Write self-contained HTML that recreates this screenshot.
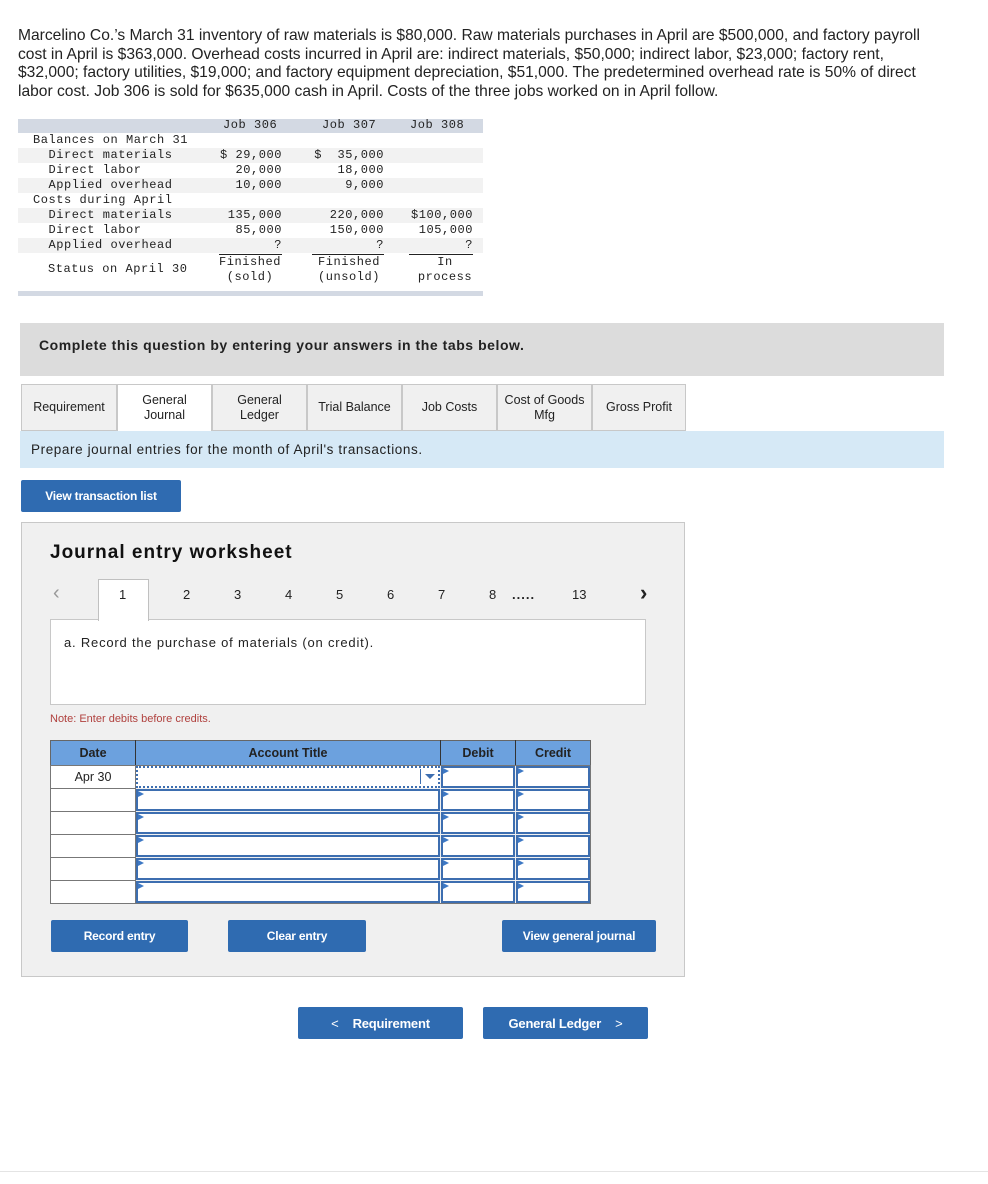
<!DOCTYPE html>
<html><head><meta charset="utf-8"><style>
*{box-sizing:border-box;margin:0;padding:0}
body{width:988px;height:1184px;background:#fff;position:relative;font-family:"Liberation Sans",Arial,sans-serif;color:#222;overflow:hidden}
.a{position:absolute}
.intro{left:18px;top:27px;font-size:15.6px;line-height:18.5px;color:#222;white-space:nowrap}
.mono{font-family:"Liberation Mono",monospace;font-size:12px;letter-spacing:0.55px;color:#222;white-space:pre}
.tab{position:absolute;top:384px;height:47px;border:1px solid #c8c8c8;background:#f0f0f0;font-size:12.5px;display:flex;align-items:center;justify-content:center;text-align:center;line-height:15px;color:#222}
.btn{position:absolute;background:#2f6bb1;color:#fff;font-weight:bold;font-size:12px;display:flex;align-items:center;justify-content:center;border-radius:2px;letter-spacing:-0.2px}
.pg{position:absolute;top:587px;font-size:13px;color:#222}
.cell{position:absolute;border:2px solid #3d6eb0;background:#fff}
.cell:before{content:"";position:absolute;left:0;top:0;border-left:6px solid #3d78c4;border-top:3px solid transparent;border-bottom:3px solid transparent}
.dc{position:absolute;left:50px;width:86px;height:24px;border:1px solid #777;background:#fff;font-size:12.5px;text-align:center;line-height:22px}
</style></head><body>
<div class="a intro">Marcelino Co.’s March 31 inventory of raw materials is $80,000. Raw materials purchases in April are $500,000, and factory payroll<br>cost in April is $363,000. Overhead costs incurred in April are: indirect materials, $50,000; indirect labor, $23,000; factory rent,<br>$32,000; factory utilities, $19,000; and factory equipment depreciation, $51,000. The predetermined overhead rate is 50% of direct<br>labor cost. Job 306 is sold for $635,000 cash in April. Costs of the three jobs worked on in April follow.</div>

<div class="a" style="left:18px;top:119px;width:465px;height:14px;background:#d3d9e3"></div>
<div class="a" style="left:18px;top:148px;width:465px;height:15px;background:#f2f2f2"></div>
<div class="a" style="left:18px;top:178px;width:465px;height:15px;background:#f2f2f2"></div>
<div class="a" style="left:18px;top:208px;width:465px;height:15px;background:#f2f2f2"></div>
<div class="a" style="left:18px;top:238px;width:465px;height:15px;background:#f2f2f2"></div>
<div class="a" style="left:18px;top:291px;width:465px;height:5px;background:#d3d9e3"></div>
<div class="a" style="left:219px;top:254px;width:63px;height:1px;background:#222"></div>
<div class="a" style="left:312px;top:254px;width:72px;height:1px;background:#222"></div>
<div class="a" style="left:409px;top:254px;width:64px;height:1px;background:#222"></div>

<div class="a mono" style="left:223px;top:118px">Job 306</div>
<div class="a mono" style="left:322px;top:118px">Job 307</div>
<div class="a mono" style="left:410px;top:118px">Job 308</div>
<div class="a mono" style="left:33px;top:133px;line-height:15px">Balances on March 31
  Direct materials
  Direct labor
  Applied overhead
Costs during April
  Direct materials
  Direct labor
  Applied overhead</div>
<div class="a mono" style="left:48px;top:262px">Status on April 30</div>
<div class="a mono" style="left:208px;top:148px;line-height:15px;text-align:right;width:74px">$ 29,000
20,000
10,000

135,000
85,000
?</div>
<div class="a mono" style="left:304px;top:148px;line-height:15px;text-align:right;width:80px">$  35,000
18,000
9,000

220,000
150,000
?</div>
<div class="a mono" style="left:394px;top:208px;line-height:15px;text-align:right;width:79px">$100,000
105,000
?</div>
<div class="a mono" style="left:210px;top:255px;line-height:15px;text-align:center;width:80px">Finished
(sold)</div>
<div class="a mono" style="left:306px;top:255px;line-height:15px;text-align:center;width:86px">Finished
(unsold)</div>
<div class="a mono" style="left:404px;top:255px;line-height:15px;text-align:center;width:82px">In
process</div>

<div class="a" style="left:20px;top:323px;width:924px;height:53px;background:#dcdcdc"></div>
<div class="a" style="left:39px;top:337px;font-size:14px;font-weight:bold;color:#222;letter-spacing:0.55px">Complete this question by entering your answers in the tabs below.</div>

<div class="tab" style="left:21px;width:96px">Requirement</div>
<div class="tab" style="left:117px;width:95px;background:#fff;border-bottom-color:#fff;height:48px">General<br>Journal</div>
<div class="tab" style="left:212px;width:95px">General<br>Ledger</div>
<div class="tab" style="left:307px;width:95px">Trial Balance</div>
<div class="tab" style="left:402px;width:95px">Job Costs</div>
<div class="tab" style="left:497px;width:95px">Cost of Goods<br>Mfg</div>
<div class="tab" style="left:592px;width:94px">Gross Profit</div>
<div class="a" style="left:20px;top:431px;width:924px;height:37px;background:#d6e9f6"></div>
<div class="a" style="left:31px;top:442px;font-size:13.5px;color:#222;letter-spacing:0.6px">Prepare journal entries for the month of April's transactions.</div>

<div class="btn" style="left:21px;top:480px;width:160px;height:32px">View transaction list</div>

<div class="a" style="left:21px;top:522px;width:664px;height:455px;background:#f0f0f0;border:1px solid #c8c8c8"></div>
<div class="a" style="left:50px;top:542px;font-size:19px;font-weight:bold;color:#111;letter-spacing:1px">Journal entry worksheet</div>
<div class="a" style="left:50px;top:619px;width:596px;height:86px;background:#fff;border:1px solid #c8c8c8"></div>
<div class="a" style="left:98px;top:579px;width:51px;height:42px;background:#fff;border:1px solid #c0c0c0;border-bottom:none"></div>
<div class="pg" style="left:53px;top:582px;font-size:20px;color:#999">‹</div>
<div class="pg" style="left:119px">1</div>
<div class="pg" style="left:183px">2</div>
<div class="pg" style="left:234px">3</div>
<div class="pg" style="left:285px">4</div>
<div class="pg" style="left:336px">5</div>
<div class="pg" style="left:387px">6</div>
<div class="pg" style="left:438px">7</div>
<div class="pg" style="left:489px">8</div>
<div class="pg" style="left:512px;font-weight:bold;letter-spacing:1px">.....</div>
<div class="pg" style="left:572px">13</div>
<div class="pg" style="left:640px;top:580px;font-size:22px;font-weight:bold;color:#222">›</div>
<div class="a" style="left:64px;top:635px;font-size:13px;color:#222;letter-spacing:0.8px">a. Record the purchase of materials (on credit).</div>
<div class="a" style="left:50px;top:713px;font-size:11px;color:#b0413e">Note: Enter debits before credits.</div>

<div class="a" style="left:50px;top:740px;width:541px;height:26px;background:#6ca1de;border:1px solid #666"></div>
<div class="a" style="left:135px;top:740px;width:1px;height:26px;background:#333"></div>
<div class="a" style="left:440px;top:740px;width:1px;height:26px;background:#333"></div>
<div class="a" style="left:515px;top:740px;width:1px;height:26px;background:#333"></div>
<div class="a" style="left:50px;top:746px;width:86px;text-align:center;font-size:12.5px;font-weight:bold">Date</div>
<div class="a" style="left:136px;top:746px;width:304px;text-align:center;font-size:12.5px;font-weight:bold">Account Title</div>
<div class="a" style="left:441px;top:746px;width:74px;text-align:center;font-size:12.5px;font-weight:bold">Debit</div>
<div class="a" style="left:516px;top:746px;width:74px;text-align:center;font-size:12.5px;font-weight:bold">Credit</div>

<div class="dc" style="top:765px">Apr 30</div>
<div class="dc" style="top:788px"></div>
<div class="dc" style="top:811px"></div>
<div class="dc" style="top:834px"></div>
<div class="dc" style="top:857px"></div>
<div class="dc" style="top:880px"></div>
<div class="a" style="left:50px;top:765px;width:541px;height:139px;border:1px solid #777;pointer-events:none"></div>

<div class="a" style="left:136px;top:766px;width:304px;height:22px;background:#fff;border:2px dotted #3d6eb0"></div>
<div class="a" style="left:420px;top:769px;width:1px;height:15px;background:#3d6eb0"></div>
<div class="a" style="left:425px;top:774px;border-left:5px solid transparent;border-right:5px solid transparent;border-top:5px solid #3d6eb0"></div>
<div class="cell" style="left:441px;top:766px;width:74px;height:22px"></div>
<div class="cell" style="left:516px;top:766px;width:74px;height:22px"></div>

<div class="cell" style="left:136px;top:789px;width:304px;height:22px"></div>
<div class="cell" style="left:441px;top:789px;width:74px;height:22px"></div>
<div class="cell" style="left:516px;top:789px;width:74px;height:22px"></div>
<div class="cell" style="left:136px;top:812px;width:304px;height:22px"></div>
<div class="cell" style="left:441px;top:812px;width:74px;height:22px"></div>
<div class="cell" style="left:516px;top:812px;width:74px;height:22px"></div>
<div class="cell" style="left:136px;top:835px;width:304px;height:22px"></div>
<div class="cell" style="left:441px;top:835px;width:74px;height:22px"></div>
<div class="cell" style="left:516px;top:835px;width:74px;height:22px"></div>
<div class="cell" style="left:136px;top:858px;width:304px;height:22px"></div>
<div class="cell" style="left:441px;top:858px;width:74px;height:22px"></div>
<div class="cell" style="left:516px;top:858px;width:74px;height:22px"></div>
<div class="cell" style="left:136px;top:881px;width:304px;height:22px"></div>
<div class="cell" style="left:441px;top:881px;width:74px;height:22px"></div>
<div class="cell" style="left:516px;top:881px;width:74px;height:22px"></div>

<div class="btn" style="left:51px;top:920px;width:137px;height:32px">Record entry</div>
<div class="btn" style="left:228px;top:920px;width:138px;height:32px">Clear entry</div>
<div class="btn" style="left:502px;top:920px;width:154px;height:32px">View general journal</div>

<div class="btn" style="left:298px;top:1007px;width:165px;height:32px;font-size:13px"><span style="font-weight:normal;margin-right:14px">&lt;</span>Requirement</div>
<div class="btn" style="left:483px;top:1007px;width:165px;height:32px;font-size:13px">General Ledger<span style="font-weight:normal;margin-left:14px">&gt;</span></div>

<div class="a" style="left:0;top:1171px;width:988px;height:1px;background:#e4e4e4"></div>
</body></html>
